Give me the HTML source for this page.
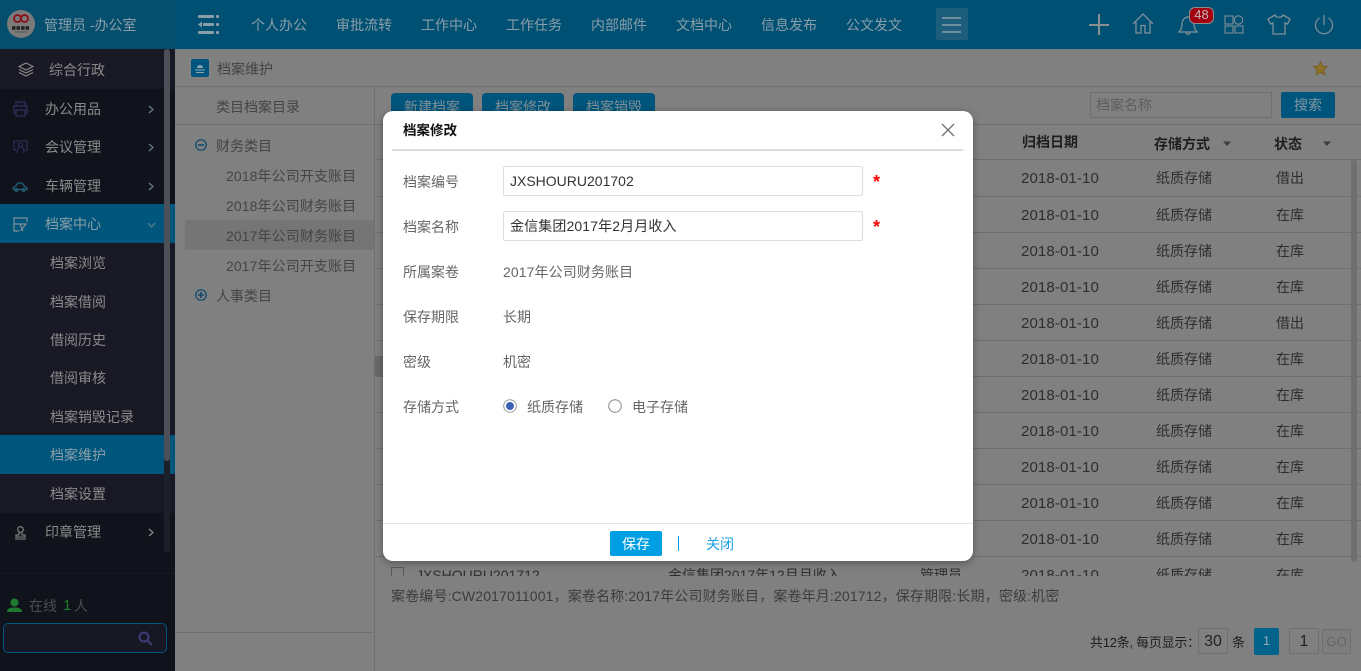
<!DOCTYPE html>
<html lang="zh"><head><meta charset="utf-8"><title>档案修改</title>
<style>
*{box-sizing:border-box;margin:0;padding:0}
html,body{width:1361px;height:671px;overflow:hidden;background:#808080}
body{position:relative;font:14px/20px "Liberation Sans","Noto Sans CJK SC",sans-serif;color:#333}
.a,.t{position:absolute}
.t{white-space:nowrap;height:20px;line-height:20px}
.hd{color:#8a9ea8}
.sb{color:#8a8a8a}
.g{color:#444}
.d{color:#2e2e2e}
.dt{font-size:15px;letter-spacing:.12px;margin-top:1px}
.tr{letter-spacing:.1px}
.l{position:absolute;height:1px;background:#6f6f6f}
.btn{position:absolute;top:93px;height:32px;width:82px;background:#00557c;border-radius:4px;color:#7f8f97;text-align:center;line-height:28px}
.m{color:#666}
.ip{position:absolute;left:120px;width:360px;height:30px;border:1px solid #ddd;border-radius:2px;color:#333;padding-left:6px;line-height:29px;background:#fff}
.star{position:absolute;left:490px;color:#f00;font-size:18px;line-height:20px;font-weight:700}
svg{position:absolute;overflow:visible}
</style></head><body>
<!-- header -->
<div class="a" style="left:0;top:0;width:1361px;height:49px;background:#005074"></div>
<div class="a" style="left:0;top:0;width:175px;height:49px;background:#064e6d"></div>
<svg style="left:7px;top:10px" width="28" height="28" viewBox="0 0 28 28"><circle cx="14" cy="14" r="14" fill="#7a7a7a"/><g fill="none" stroke="#8c0d1a" stroke-width="1.800"><circle cx="10.500" cy="8.500" r="3.500"/><circle cx="17.500" cy="8.500" r="3.500"/></g><path d="M5 18H23" stroke="#222" stroke-width="3.500" stroke-dasharray="3.500 1"/><path d="M8 22H20" stroke="#555" stroke-width="1"/></svg>
<span class="t hd" style="left:44px;top:15px">管理员 -办公室</span>
<svg style="left:197px;top:14px" width="23" height="20" fill="#8a9ea8"><rect x="1" y="1" width="16" height="3" rx="1"/><rect x="19" y="1" width="3" height="3" rx="1"/><rect x="6" y="9" width="11" height="3" rx="1"/><path d="M1 10.500L5 7.500V13.500Z"/><rect x="19" y="9" width="3" height="3" rx="1"/><rect x="1" y="17" width="16" height="3" rx="1"/><rect x="19" y="17" width="3" height="3" rx="1"/></svg>
<span class="t hd" style="left:251px;top:15px">个人办公</span>
<span class="t hd" style="left:336px;top:15px">审批流转</span>
<span class="t hd" style="left:421px;top:15px">工作中心</span>
<span class="t hd" style="left:506px;top:15px">工作任务</span>
<span class="t hd" style="left:591px;top:15px">内部邮件</span>
<span class="t hd" style="left:676px;top:15px">文档中心</span>
<span class="t hd" style="left:761px;top:15px">信息发布</span>
<span class="t hd" style="left:846px;top:15px">公文发文</span>
<div class="a" style="left:936px;top:8px;width:32px;height:32px;background:#1d5e7d"></div>
<svg style="left:942px;top:17px" width="20" height="16" stroke="#8a9ea8" stroke-width="1.500"><path d="M0 1H19M0 8H19M0 15H19"/></svg>
<svg style="left:1088px;top:14px" width="22" height="22" stroke="#8a8f92" stroke-width="2"><path d="M11 0V21M1 11H21"/></svg>
<svg style="left:1132px;top:13px" width="23" height="22" fill="none" stroke="#7f8f97" stroke-width="1.300"><path d="M1 11L11 1L21 11M4 9V20H9V12.500H13V20H18V9"/></svg>
<svg style="left:1178px;top:15px" width="22" height="20" fill="none" stroke="#7f8f97" stroke-width="1.300"><path d="M1 17C4 14 4 11 4 9C4 5 7 2 10 2C14 2 16 5 16 9C16 12 17 15 19 17ZM8 17C8 20 12 20 12 17"/></svg>
<div class="a" style="left:1189px;top:7px;width:25px;height:17px;background:#a20010;border:1.500px solid #8d8d8d;border-radius:6px;color:#c8b4b4;font-size:13px;line-height:14px;text-align:center">48</div>
<svg style="left:1224px;top:15px" width="20" height="19" fill="none" stroke="#7f8f97" stroke-width="1.100"><rect x="1" y="1" width="8" height="8"/><circle cx="14.500" cy="5" r="4.200"/><rect x="1" y="11" width="8" height="7"/><rect x="11" y="11" width="8" height="7"/></svg>
<svg style="left:1267px;top:14px" width="24" height="21" fill="none" stroke="#7f8f97" stroke-width="1.300"><path d="M8 1L1 5L3.500 10L6 9V20H18V9L20.500 10L23 5L16 1C15 4 9 4 8 1Z"/></svg>
<svg style="left:1314px;top:14px" width="20" height="20" fill="none" stroke="#7f8f97" stroke-width="1.300"><path d="M10 1V11M5.500 4A8.500 8.500 0 1 0 14.500 4"/></svg>

<!-- sidebar -->
<div class="a" style="left:0;top:49px;width:175px;height:622px;background:#10131b"></div>
<div class="a" style="left:0;top:49px;width:175px;height:40px;background:#191925"></div>
<div class="a" style="left:0;top:204px;width:175px;height:39px;background:#00557c"></div>
<div class="a" style="left:0;top:243px;width:175px;height:270px;background:#191925"></div>
<div class="a" style="left:0;top:435px;width:175px;height:39px;background:#00557c"></div>
<div class="a" style="left:0;top:573px;width:175px;height:1px;background:#171a22"></div>
<div class="a" style="left:164px;top:49px;width:6px;height:503px;background:#1c2029;border-radius:3px"></div>
<div class="a" style="left:164px;top:49px;width:6px;height:412px;background:#4d5057;border-radius:3px"></div>
<svg style="left:18px;top:62px" width="16" height="15" fill="none" stroke="#8a8a8a" stroke-width="1.100"><path d="M8 1L15 4.500L8 8L1 4.500ZM1 7.500L8 11L15 7.500M1 10.500L8 14L15 10.500"/></svg>
<span class="t sb" style="left:49px;top:60px">综合行政</span>
<svg style="left:13px;top:101px" width="15" height="16" fill="none" stroke="#2c2a55" stroke-width="1.500"><path d="M3 5V1H12V5M3 12H1V5H14V12H12M3 9H12V15H3Z"/></svg>
<span class="t sb" style="left:45px;top:99px">办公用品</span>
<svg style="left:13px;top:140px" width="15" height="14" fill="none" stroke="#2c2a55" stroke-width="1.300"><path d="M3 10H1V1H14V10H12M4 13C4 8 6 7 7.500 7C9 7 11 8 11 13"/><circle cx="7.500" cy="5" r="2"/></svg>
<span class="t sb" style="left:45px;top:137px">会议管理</span>
<svg style="left:12px;top:182px" width="16" height="10" fill="none" stroke="#1e5a70" stroke-width="1.500"><path d="M1 7C1 5 3 5 3.500 4.500L5 2C7 .5 10 .5 11 2L12.500 4.500C14 5 15 5 15 7.500H1"/><circle cx="4.500" cy="8" r="1.200"/><circle cx="11.500" cy="8" r="1.200"/></svg>
<span class="t sb" style="left:45px;top:176px">车辆管理</span>
<svg style="left:13px;top:217px" width="15" height="15" fill="none" stroke="#7f8f97" stroke-width="1.200"><path d="M14 5V1H1V14H6M1 7H14M7 7L10 14M13 7L7.500 14"/></svg>
<span class="t hd" style="left:45px;top:214px">档案中心</span>
<span class="t sb" style="left:50px;top:253px">档案浏览</span>
<span class="t sb" style="left:50px;top:292px">档案借阅</span>
<span class="t sb" style="left:50px;top:330px">借阅历史</span>
<span class="t sb" style="left:50px;top:368px">借阅审核</span>
<span class="t sb" style="left:50px;top:407px">档案销毁记录</span>
<span class="t hd" style="left:50px;top:445px">档案维护</span>
<span class="t sb" style="left:50px;top:484px">档案设置</span>
<svg style="left:14px;top:526px" width="13" height="14" fill="none" stroke="#8a8a8a" stroke-width="1.100"><circle cx="6.500" cy="3.500" r="2.800"/><path d="M5 6.500V9H2V11H11V9H8V6.500M1 13H12"/></svg>
<span class="t sb" style="left:45px;top:522px">印章管理</span>
<svg style="left:148px;top:105px" width="6" height="9" fill="none" stroke="#67808d" stroke-width="1.200"><path d="M1 1L5 4.500L1 8"/></svg>
<svg style="left:148px;top:143px" width="6" height="9" fill="none" stroke="#67808d" stroke-width="1.200"><path d="M1 1L5 4.500L1 8"/></svg>
<svg style="left:148px;top:182px" width="6" height="9" fill="none" stroke="#67808d" stroke-width="1.200"><path d="M1 1L5 4.500L1 8"/></svg>
<svg style="left:147px;top:222px" width="9" height="6" fill="none" stroke="#67808d" stroke-width="1.200"><path d="M1 1L4.500 5L8 1"/></svg>
<svg style="left:148px;top:528px" width="6" height="9" fill="none" stroke="#8a8a8a" stroke-width="1.200"><path d="M1 1L5 4.500L1 8"/></svg>
<svg style="left:7px;top:598px" width="15" height="15" fill="#1d7a2e"><circle cx="7.500" cy="4.500" r="4"/><path d="M0 14C0 10 4 9.500 7.500 9.500C11 9.500 15 10 15 14Z"/></svg>
<span class="t" style="left:29px;top:596px;color:#4a4f52">在线</span>
<span class="t" style="left:63px;top:596px;color:#1c7c2c;font-size:15px">1</span>
<span class="t" style="left:74px;top:596px;color:#4a4f52">人</span>
<div class="a" style="left:3px;top:623px;width:164px;height:30px;background:#181824;border:1px solid #00557c;border-radius:5px"></div>
<svg style="left:138px;top:631px" width="15" height="15" fill="none" stroke="#3f3a75" stroke-width="2"><circle cx="6" cy="6" r="4.500"/><path d="M9.500 9.500L14 14"/></svg>

<!-- breadcrumb -->
<div class="l" style="left:175px;top:86px;width:1186px"></div>
<svg style="left:191px;top:59px" width="18" height="18"><rect width="18" height="18" rx="2" fill="#00557c"/><path d="M6 9A3 3 0 0 1 12 9ZM4 10.500H14V11.500H4ZM5 13H13V14H5Z" fill="#8fa7b3"/></svg>
<span class="t g" style="left:217px;top:59px">档案维护</span>
<svg style="left:1313px;top:61px" width="15" height="15"><path d="M7.500 0.500L9.500 5.200L14.500 5.600L10.700 8.900L11.900 13.900L7.500 11.200L3.100 13.900L4.300 8.900L.5 5.600L5.500 5.200Z" fill="#8f7228" stroke="#75591f" stroke-width=".8"/></svg>

<!-- tree -->
<div class="l" style="left:374px;top:86px;width:1px;height:585px"></div>
<div class="l" style="left:175px;top:124px;width:200px"></div>
<div class="l" style="left:175px;top:632px;width:200px"></div>
<span class="t g" style="left:216px;top:97px">类目档案目录</span>
<svg style="left:195px;top:139px" width="12" height="12" fill="none" stroke="#0c4a70" stroke-width="1.200"><circle cx="6" cy="6" r="5.200"/><path d="M3 6H9" stroke-width="1.600"/></svg>
<span class="t g" style="left:216px;top:136px">财务类目</span>
<span class="t g tr" style="left:226px;top:166px">2018年公司开支账目</span>
<span class="t g tr" style="left:226px;top:196px">2018年公司财务账目</span>
<div class="a" style="left:185px;top:220px;width:189px;height:30px;background:#757575"></div>
<span class="t g tr" style="left:226px;top:226px">2017年公司财务账目</span>
<span class="t g tr" style="left:226px;top:256px">2017年公司开支账目</span>
<svg style="left:195px;top:289px" width="12" height="12" fill="none" stroke="#0c4a70" stroke-width="1.200"><circle cx="6" cy="6" r="5.200"/><path d="M3 6H9M6 3V9" stroke-width="1.600"/></svg>
<span class="t g" style="left:216px;top:286px">人事类目</span>

<!-- toolbar -->
<div class="btn" style="left:391px">新建档案</div>
<div class="btn" style="left:482px">档案修改</div>
<div class="btn" style="left:573px">档案销毁</div>
<div class="a" style="left:1090px;top:92px;width:182px;height:26px;border:1px solid #6f6f6f;color:#5e5e5e;padding-left:5px;line-height:25px">档案名称</div>
<div class="a" style="left:1281px;top:92px;width:54px;height:26px;background:#00557c;border-radius:2px;color:#7f95a1;text-align:center;line-height:26px">搜索</div>

<!-- table -->
<div class="l" style="left:375px;top:124px;width:986px"></div>
<div class="l" style="left:375px;top:159px;width:986px"></div>
<div class="l" style="left:375px;top:196px;width:986px"></div>
<div class="l" style="left:375px;top:232px;width:986px"></div>
<div class="l" style="left:375px;top:268px;width:986px"></div>
<div class="l" style="left:375px;top:304px;width:986px"></div>
<div class="l" style="left:375px;top:340px;width:986px"></div>
<div class="l" style="left:375px;top:376px;width:986px"></div>
<div class="l" style="left:375px;top:412px;width:986px"></div>
<div class="l" style="left:375px;top:448px;width:986px"></div>
<div class="l" style="left:375px;top:484px;width:986px"></div>
<div class="l" style="left:375px;top:520px;width:986px"></div>
<div class="l" style="left:375px;top:556px;width:986px"></div>
<div class="a" style="left:375px;top:356px;width:8px;height:21px;background:#6a6a6a"></div>
<span class="t" style="left:1022px;top:132px;color:#1e1e1e;font-weight:700">归档日期</span>
<span class="t" style="left:1154px;top:134px;color:#1e1e1e;font-weight:700">存储方式</span>
<span class="t" style="left:1274px;top:134px;color:#1e1e1e;font-weight:700">状态</span>
<svg style="left:1222px;top:141px" width="10" height="6" fill="#3d3d3d"><path d="M1 0.500H9L5 5Z"/></svg>
<svg style="left:1322px;top:141px" width="10" height="6" fill="#3d3d3d"><path d="M1 0.500H9L5 5Z"/></svg>
<div class="a" style="left:1351px;top:160px;width:6px;height:402px;background:#6f6f6f;border-radius:3px"></div>

<span class="t d dt" style="left:1021px;top:168px">2018-01-10</span><span class="t d" style="left:1156px;top:168px">纸质存储</span><span class="t d" style="left:1276px;top:168px">借出</span>
<span class="t d dt" style="left:1021px;top:205px">2018-01-10</span><span class="t d" style="left:1156px;top:205px">纸质存储</span><span class="t d" style="left:1276px;top:205px">在库</span>
<span class="t d dt" style="left:1021px;top:241px">2018-01-10</span><span class="t d" style="left:1156px;top:241px">纸质存储</span><span class="t d" style="left:1276px;top:241px">在库</span>
<span class="t d dt" style="left:1021px;top:277px">2018-01-10</span><span class="t d" style="left:1156px;top:277px">纸质存储</span><span class="t d" style="left:1276px;top:277px">在库</span>
<span class="t d dt" style="left:1021px;top:313px">2018-01-10</span><span class="t d" style="left:1156px;top:313px">纸质存储</span><span class="t d" style="left:1276px;top:313px">借出</span>
<span class="t d dt" style="left:1021px;top:349px">2018-01-10</span><span class="t d" style="left:1156px;top:349px">纸质存储</span><span class="t d" style="left:1276px;top:349px">在库</span>
<span class="t d dt" style="left:1021px;top:385px">2018-01-10</span><span class="t d" style="left:1156px;top:385px">纸质存储</span><span class="t d" style="left:1276px;top:385px">在库</span>
<span class="t d dt" style="left:1021px;top:421px">2018-01-10</span><span class="t d" style="left:1156px;top:421px">纸质存储</span><span class="t d" style="left:1276px;top:421px">在库</span>
<span class="t d dt" style="left:1021px;top:457px">2018-01-10</span><span class="t d" style="left:1156px;top:457px">纸质存储</span><span class="t d" style="left:1276px;top:457px">在库</span>
<span class="t d dt" style="left:1021px;top:493px">2018-01-10</span><span class="t d" style="left:1156px;top:493px">纸质存储</span><span class="t d" style="left:1276px;top:493px">在库</span>
<span class="t d dt" style="left:1021px;top:529px">2018-01-10</span><span class="t d" style="left:1156px;top:529px">纸质存储</span><span class="t d" style="left:1276px;top:529px">在库</span>
<div class="a" style="left:375px;top:556px;width:976px;height:20px;overflow:hidden">
<div class="a" style="left:16px;top:11px;width:13px;height:13px;border:1px solid #5a5a5a"></div>
<span class="t d" style="left:41px;top:9px">JXSHOURU201712</span>
<span class="t d" style="left:293px;top:9px">金信集团2017年12月月收入</span>
<span class="t d" style="left:545px;top:9px">管理员</span>
<span class="t d dt" style="left:646px;top:9px">2018-01-10</span>
<span class="t d" style="left:781px;top:9px">纸质存储</span>
<span class="t d" style="left:901px;top:9px">在库</span>
</div>
<span class="t" style="left:391px;top:586px;color:#3c3c3c;letter-spacing:.15px">案卷编号:CW2017011001，案卷名称:2017年公司财务账目，案卷年月:201712，保存期限:长期，密级:机密</span>

<!-- pagination -->
<span class="t" style="left:1090px;top:633px;color:#1e1e1e;font-size:13px;letter-spacing:-.25px">共12条, 每页显示：</span>
<div class="a" style="left:1198px;top:628px;width:30px;height:26px;border:1px solid #6f6f6f;border-radius:2px;text-align:center;line-height:25px;color:#222;font-size:16px">30</div>
<span class="t" style="left:1232px;top:633px;color:#1e1e1e;font-size:13px">条</span>
<div class="a" style="left:1254px;top:628px;width:25px;height:27px;background:#00648a;border-radius:2px;text-align:center;line-height:26px;color:#8fa7b3;font-size:13px">1</div>
<div class="a" style="left:1289px;top:628px;width:30px;height:26px;border:1px solid #6f6f6f;border-radius:2px;text-align:center;line-height:25px;color:#222;font-size:16px">1</div>
<div class="a" style="left:1322px;top:629px;width:29px;height:25px;border:1px solid #6f6f6f;border-radius:2px;background:#7d7d7d;text-align:center;line-height:24px;color:#666;font-size:13px">GO</div>

<!-- modal -->
<div class="a" style="left:383px;top:111px;width:590px;height:450px;background:#fff;border-radius:10px;box-shadow:0 2px 8px rgba(0,0,0,.35)">
<span class="t" style="left:20px;top:10px;color:#111;font-weight:700;font-size:13.500px">档案修改</span>
<svg style="left:558px;top:12px" width="14" height="14" stroke="#6f6f6f" stroke-width="1.300"><path d="M1 1L13 13M13 1L1 13"/></svg>
<div class="a" style="left:9px;top:38px;width:571px;height:2px;background:#ddd"></div>
<span class="t m" style="left:20px;top:61px">档案编号</span>
<div class="ip" style="top:55px">JXSHOURU201702</div>
<span class="star" style="top:61px">*</span>
<span class="t m" style="left:20px;top:106px">档案名称</span>
<div class="ip" style="top:100px;letter-spacing:.12px">金信集团2017年2月月收入</div>
<span class="star" style="top:106px">*</span>
<span class="t m" style="left:20px;top:151px">所属案卷</span>
<span class="t m tr" style="left:120px;top:151px">2017年公司财务账目</span>
<span class="t m" style="left:20px;top:196px">保存期限</span>
<span class="t m" style="left:120px;top:196px">长期</span>
<span class="t m" style="left:20px;top:241px">密级</span>
<span class="t m" style="left:120px;top:241px">机密</span>
<span class="t m" style="left:20px;top:286px">存储方式</span>
<svg style="left:120px;top:288px" width="14" height="14"><circle cx="7" cy="7" r="6.300" fill="#fff" stroke="#999"/><circle cx="7" cy="7" r="4" fill="#3a62b8"/></svg>
<span class="t m" style="left:144px;top:286px">纸质存储</span>
<svg style="left:225px;top:288px" width="14" height="14"><circle cx="7" cy="7" r="6.300" fill="#fff" stroke="#888"/></svg>
<span class="t m" style="left:249px;top:286px">电子存储</span>
<div class="a" style="left:0;top:412px;width:590px;height:1px;background:#e2e2e2"></div>
<div class="a" style="left:227px;top:420px;width:52px;height:25px;background:#009fe3;border-radius:2px;color:#fff;text-align:center;line-height:26px">保存</div>
<div class="a" style="left:295px;top:425px;width:1px;height:15px;background:#009fe3"></div>
<span class="t" style="left:323px;top:423px;color:#1a9fe3">关闭</span>
</div>
</body></html>
